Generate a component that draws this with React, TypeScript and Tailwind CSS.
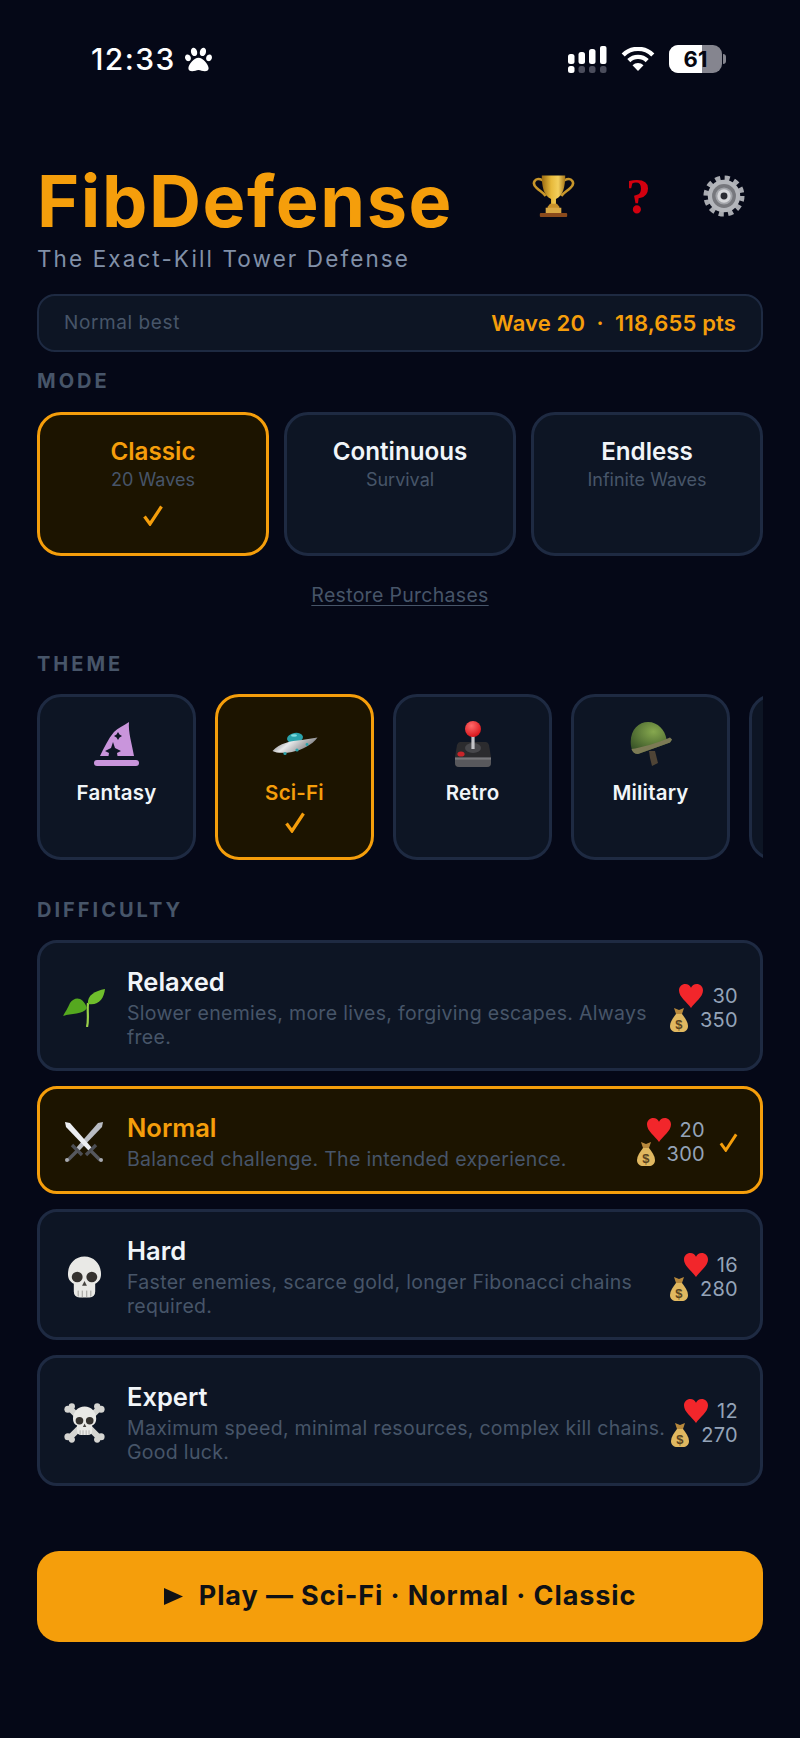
import { FaPaw } from 'react-icons/fa';

function Check({ className }: { className: string }) {
  return (
    <svg viewBox="0 0 20 21" className={className} fill="none">
      <path d="M1.5 11.5 L7 19 L18.5 1.5" stroke="#f59e0b" strokeWidth="3.2" strokeLinejoin="miter" />
    </svg>
  );
}

function Wifi() {
  return (
    <svg viewBox="0 0 34 24" className="w-[34px] h-[24px]" fill="none">
      <path d="M2.2 8A21 21 0 0 1 31.8 8" stroke="white" strokeWidth="4.4" />
      <path d="M7.8 13.6A13.2 13.2 0 0 1 26.2 13.6" stroke="white" strokeWidth="4.4" />
      <path d="M17 24L11.5 18.2A8 8 0 0 1 22.5 18.2Z" fill="white" />
    </svg>
  );
}

function Signal() {
  return (
    <svg viewBox="0 0 39 27" className="w-[39px] h-[27px]">
      <rect x="0" y="8" width="6.5" height="10" rx="2.5" fill="white" />
      <rect x="10.5" y="6" width="6.5" height="12" rx="2.5" fill="white" />
      <rect x="21" y="3" width="6.5" height="15" rx="2.5" fill="white" />
      <rect x="32" y="0" width="6.5" height="18" rx="2" fill="white" />
      <rect x="0" y="20" width="6.5" height="7" rx="2.5" fill="white" />
      <rect x="10.5" y="20" width="6.5" height="7" rx="2.5" fill="#4b4d5c" />
      <rect x="21" y="20" width="6.5" height="7" rx="2.5" fill="#4b4d5c" />
      <rect x="32" y="20" width="6.5" height="7" rx="2.5" fill="#4b4d5c" />
    </svg>
  );
}

function Battery() {
  return (
    <div className="flex items-center gap-[1px]">
      <div className="relative w-[53px] h-[28px] rounded-[9px] bg-[#85858f] overflow-hidden">
        <div className="absolute left-0 top-0 bottom-0 w-[33px] bg-white" />
        <div className="absolute inset-0 flex items-center justify-center text-[#05060f] text-[22px] font-bold leading-none">61</div>
      </div>
      <div className="w-[3px] h-[10px] rounded-r-full bg-[#85858f]" />
    </div>
  );
}

function Trophy() {
  return (
    <svg viewBox="0 0 44 44" className="w-[43px] h-[44px]" fill="none">
      <defs>
        <linearGradient id="cup" x1="0" x2="1" y1="0" y2="0">
          <stop offset="0" stopColor="#9a6a12" />
          <stop offset="0.4" stopColor="#e7b93a" />
          <stop offset="0.7" stopColor="#f3cf5c" />
          <stop offset="1" stopColor="#a8761a" />
        </linearGradient>
      </defs>
      <path d="M11 6 C3 2 -1 9 5 14 C8 17 11 18 14 22" stroke="#c8962a" strokeWidth="2.6" />
      <path d="M33 6 C41 2 45 9 39 14 C36 17 33 18 30 22" stroke="#c8962a" strokeWidth="2.6" />
      <path d="M10 1 H34 C34 12 32 22 24.5 25 V31 H19.5 V25 C12 22 10 12 10 1Z" fill="url(#cup)" />
      <path d="M16 33 L18.5 30 H25.5 L28 33 V38 H16Z" fill="#c8912a" />
      <rect x="14" y="34" width="16" height="6" fill="#d9a945" />
      <rect x="8" y="39.5" width="28" height="4" rx="1" fill="#8a4a1c" />
    </svg>
  );
}

function Gear() {
  return (
    <svg viewBox="0 0 44 44" className="w-[42px] h-[42px]" fill="none">
      <circle cx="22" cy="22" r="18.5" stroke="#a9abb1" strokeWidth="6" strokeDasharray="5.2 4.5" />
      <circle cx="22" cy="22" r="17" fill="#b4b6bb" />
      <circle cx="22" cy="22" r="12.5" fill="#77787d" />
      <circle cx="22" cy="22" r="9" fill="#a2a4a9" />
      <circle cx="22" cy="22" r="7" fill="#d6d7da" />
      <circle cx="22" cy="22" r="3.6" fill="#2b2c33" />
    </svg>
  );
}

function Hat() {
  return (
    <svg viewBox="0 0 45 44" className="w-[45px] h-[44px]">
      <path d="M35 0 C29 4 24 6 20 10 C14 17 10 26 6 34 H40 C38 22 34 10 35 0Z" fill="#c995dc" />
      <path d="M24 10 L25.5 12.5 L28 14 L25.5 15.5 L24 18 L22.5 15.5 L20 14 L22.5 12.5Z" fill="#0d1524" />
      <path d="M19 20 L21 26 L27 29 L23 31 L23.5 34 H14.5 L15 31 L11 29 L17 26Z" fill="#0d1524" />
      <rect x="0" y="38" width="45" height="6" rx="3" fill="#c995dc" />
    </svg>
  );
}

function Ufo() {
  return (
    <svg viewBox="0 0 46 24" className="w-[46px] h-[24px]">
      <defs>
        <linearGradient id="disc" x1="0" x2="1" y1="0" y2="0.4">
          <stop offset="0" stopColor="#5c5d60" />
          <stop offset="0.45" stopColor="#e8e9ea" />
          <stop offset="1" stopColor="#77787c" />
        </linearGradient>
      </defs>
      <ellipse cx="23" cy="6" rx="8" ry="5" fill="#2aa3ab" transform="rotate(-10 23 6)" />
      <ellipse cx="22" cy="3.5" rx="3" ry="1.2" fill="#7fdde0" />
      <path d="M0.5 19 C8 11 18 9 30 8 L45.5 5.5 C40 13 30 18 20 20 C12 21.5 4 21 0.5 19Z" fill="url(#disc)" />
      <circle cx="13" cy="21.5" r="1.6" fill="#2aa3ab" />
      <circle cx="25" cy="18" r="1.6" fill="#2aa3ab" />
      <circle cx="35" cy="12.5" r="1.4" fill="#2aa3ab" />
    </svg>
  );
}

function Joystick() {
  return (
    <svg viewBox="0 0 36 46" className="w-[36px] h-[46px]">
      <defs>
        <radialGradient id="ball" cx="0.4" cy="0.3" r="0.7">
          <stop offset="0" stopColor="#ff6a6a" />
          <stop offset="1" stopColor="#d9161c" />
        </radialGradient>
      </defs>
      <path d="M5 21 H31 Q33 21 34 24 L36 36 V42 Q36 46 32 46 H4 Q0 46 0 42 V36 L2 24 Q3 21 5 21Z" fill="#2b2b2e" />
      <path d="M0 36 H36 V42 Q36 46 32 46 H4 Q0 46 0 42Z" fill="#58585c" />
      <rect x="0" y="37" width="36" height="1.6" fill="#77777b" />
      <ellipse cx="18" cy="27" rx="8" ry="5" fill="#47474b" />
      <rect x="16.4" y="14" width="3.2" height="14" fill="#c4c4c8" />
      <circle cx="18" cy="8" r="8" fill="url(#ball)" />
      <ellipse cx="6" cy="33" rx="3.6" ry="2.6" fill="#c8242a" />
    </svg>
  );
}

function Helmet() {
  return (
    <svg viewBox="0 0 42 44" className="w-[42px] h-[44px]">
      <defs>
        <radialGradient id="dome" cx="0.55" cy="0.3" r="0.7">
          <stop offset="0" stopColor="#86a84e" />
          <stop offset="1" stopColor="#3a5528" />
        </radialGradient>
      </defs>
      <path d="M19 29 H25 L28 41 L22 44 L20 36Z" fill="#4f4436" />
      <path d="M1 24 C-1 9 8 0 18 0 C28 0 35 8 36.5 17 L42 17.5 L40 20.5 L8 32 Q2 32 1 24Z" fill="url(#dome)" />
      <path d="M1.5 27 C10 26 28 21 40 15.5 L42 17.5 L40 20.5 L8 32 Q3 32 1.5 27Z" fill="#7c7a55" />
    </svg>
  );
}

function Seedling() {
  return (
    <svg viewBox="0 0 42 38" className="w-[42px] h-[38px]" fill="none">
      <path d="M24 38 C26 30 24 22 25 14" stroke="#9ad04a" strokeWidth="2.2" />
      <path d="M24 19 C20 8 12 7 7 14 C5 19 2 23 0 27 C8 24 20 26 24 19Z" fill="#55a81f" />
      <path d="M25 15 C24 6 32 2 42 0 C41 9 36 17 25 15Z" fill="#6fbe2c" />
    </svg>
  );
}

function Swords() {
  return (
    <svg viewBox="0 0 40 40" className="w-[40px] h-[40px]" fill="none">
      <path d="M39 0 L34 1 L12 26 L15 29 L38 5Z" fill="#b9bcc3" />
      <path d="M1 0 L6 1 L28 26 L25 29 L2 5Z" fill="#eceef2" />
      <path d="M8 23 L18 33" stroke="#4d4f55" strokeWidth="3.4" />
      <path d="M32 23 L22 33" stroke="#4d4f55" strokeWidth="3.4" />
      <path d="M13 29 L4 38" stroke="#56585e" strokeWidth="3.4" />
      <path d="M27 29 L36 38" stroke="#56585e" strokeWidth="3.4" />
      <circle cx="3" cy="38" r="2" fill="#a8aab0" />
      <circle cx="37" cy="38" r="2" fill="#a8aab0" />
    </svg>
  );
}

function SkullFace() {
  return (
    <>
      <path d="M18 0 C28 0 35 8 35 18 C35 23 33 26 29 28 V36 Q29 42 23 42 H13 Q7 42 7 36 V28 C3 26 1 23 1 18 C1 8 8 0 18 0Z" fill="#e9e9e6" />
      <ellipse cx="10.5" cy="21" rx="5.6" ry="5.4" fill="#35322f" />
      <ellipse cx="25.5" cy="21" rx="5.6" ry="5.4" fill="#35322f" />
      <path d="M18 25 L20.5 30 H15.5Z" fill="#45423f" />
      <path d="M11.5 35 V41 M15.7 35 V42 M20.3 35 V42 M24.5 35 V41" stroke="#9b9a96" strokeWidth="1" fill="none" />
    </>
  );
}

function Skull() {
  return (
    <svg viewBox="0 0 36 42" className="w-[35px] h-[42px]">
      <SkullFace />
    </svg>
  );
}

function Crossbones() {
  return (
    <svg viewBox="0 0 42 40" className="w-[41px] h-[40px]">
      <path d="M6 5 L36 35 M36 5 L6 35" stroke="#d5d5d2" strokeWidth="6" fill="none" />
      <circle cx="4" cy="6" r="3.6" fill="#d5d5d2" />
      <circle cx="8" cy="3" r="3.2" fill="#d5d5d2" />
      <circle cx="38" cy="6" r="3.6" fill="#d5d5d2" />
      <circle cx="34" cy="3" r="3.2" fill="#d5d5d2" />
      <circle cx="4" cy="34" r="3.6" fill="#d5d5d2" />
      <circle cx="8" cy="37" r="3.2" fill="#d5d5d2" />
      <circle cx="38" cy="34" r="3.6" fill="#d5d5d2" />
      <circle cx="34" cy="37" r="3.2" fill="#d5d5d2" />
      <g transform="translate(8.5 3) scale(0.7)">
        <SkullFace />
      </g>
    </svg>
  );
}

function Heart() {
  return (
    <svg viewBox="0 0 24 24" className="w-[24px] h-[24px]">
      <path d="M12 24 C8 18 0 13 0 6.5 C0 2.5 3 0 6.3 0 C9 0 11 1.5 12 3.8 C13 1.5 15 0 17.7 0 C21 0 24 2.5 24 6.5 C24 13 16 18 12 24Z" fill="#f2262b" />
    </svg>
  );
}

function MoneyBag() {
  return (
    <svg viewBox="0 0 18 24" className="w-[18px] h-[24px]">
      <path d="M4 0 L9 2 L14 0 L12 6 H6Z" fill="#b8893c" />
      <path d="M6 6 H12 C15 10 18 14 18 18 C18 22 15 24 12 24 H6 C3 24 0 22 0 18 C0 14 3 10 6 6Z" fill="#e0b860" />
      <text x="9" y="20.5" textAnchor="middle" fontSize="13" fontWeight="700" fill="#5a4420" fontFamily="Liberation Sans">$</text>
    </svg>
  );
}

const modes = [
  { name: 'Classic', sub: '20 Waves', on: true },
  { name: 'Continuous', sub: 'Survival', on: false },
  { name: 'Endless', sub: 'Infinite Waves', on: false },
];

const themes = [
  { name: 'Fantasy', icon: <Hat />, on: false },
  { name: 'Sci-Fi', icon: <Ufo />, on: true },
  { name: 'Retro', icon: <Joystick />, on: false },
  { name: 'Military', icon: <Helmet />, on: false },
];

const levels = [
  { name: 'Relaxed', desc: 'Slower enemies, more lives, forgiving escapes. Always free.', lives: 30, gold: 350, icon: <Seedling />, on: false },
  { name: 'Normal', desc: 'Balanced challenge. The intended experience.', lives: 20, gold: 300, icon: <Swords />, on: true },
  { name: 'Hard', desc: 'Faster enemies, scarce gold, longer Fibonacci chains required.', lives: 16, gold: 280, icon: <Skull />, on: false },
  { name: 'Expert', desc: 'Maximum speed, minimal resources, complex kill chains. Good luck.', lives: 12, gold: 270, icon: <Crossbones />, on: false },
];

function Label({ children, className }: { children: string; className: string }) {
  return <div className={`text-[20px] leading-[24px] font-bold tracking-[3px] text-[#475569] ${className}`}>{children}</div>;
}

export default function App() {
  return (
    <div className="w-[800px] h-[1738px] bg-[#050817] px-[37px] [font-family:Inter,sans-serif] overflow-hidden">
      <div className="flex items-center justify-between h-[30px] mt-[44px] ml-[54px] mr-[-37px] pr-[74px]">
        <div className="flex items-center gap-[8px] text-white">
          <span className="text-[30px] font-medium leading-none tracking-[1.4px]">12:33</span>
          <FaPaw className="w-[29px] h-[27px]" />
        </div>
        <div className="flex items-center gap-[14px]">
          <Signal />
          <Wifi />
          <Battery />
        </div>
      </div>

      <div className="flex items-center justify-between h-[80px] mt-[87px]">
        <h1 className="text-[72px] leading-[80px] font-bold tracking-[1.6px] text-[#f59e0b]">FibDefense</h1>
        <div className="flex items-center pr-[18px] mb-[10px]">
          <Trophy />
          <div className="w-[55px] text-center text-[50px] leading-[44px] font-bold text-[#d3000f] [font-family:'Liberation_Serif',serif] ml-[36px]">?</div>
          <div className="ml-[37px]">
            <Gear />
          </div>
        </div>
      </div>
      <p className="text-[22.5px] leading-[30px] tracking-[2.1px] text-[#8190a8] mt-[3px]">The Exact-Kill Tower Defense</p>

      <div className="flex items-center justify-between h-[58px] mt-[20px] px-[25px] bg-[#0d1524] border-2 border-[#1e2a42] rounded-[18px]">
        <span className="text-[19px] tracking-[0.6px] text-[#475569]">Normal best</span>
        <span className="text-[22px] font-semibold tracking-[0.15px] text-[#f59e0b]">Wave 20 &nbsp;·&nbsp; 118,655 pts</span>
      </div>

      <Label className="mt-[17px]">MODE</Label>
      <div className="flex gap-[15px] mt-[19px]">
        {modes.map((m) => (
          <div
            key={m.name}
            className={`w-[232px] h-[144px] rounded-[24px] border-[3px] flex flex-col items-center pt-[22px] ${m.on ? 'bg-[#1c1400] border-[#f59e0b]' : 'bg-[#0d1524] border-[#1e2a42]'}`}
          >
            <div className={`text-[24.2px] leading-[30px] font-semibold ${m.on ? 'text-[#f59e0b]' : 'text-[#f1f5f9]'}`}>{m.name}</div>
            <div className="text-[18px] leading-[26px] text-[#475569]">{m.sub}</div>
            {m.on && <Check className="w-[20px] h-[21px] mt-[12px]" />}
          </div>
        ))}
      </div>

      <div className="text-center mt-[27px] text-[19.5px] leading-[24px] tracking-[0.3px] text-[#475569] underline underline-offset-[3px]">Restore Purchases</div>

      <Label className="mt-[45px]">THEME</Label>
      <div className="flex gap-[19px] mt-[18px] overflow-hidden">
        {themes.map((t) => (
          <div
            key={t.name}
            className={`w-[159px] h-[166px] shrink-0 rounded-[24px] border-[3px] flex flex-col items-center ${t.on ? 'bg-[#1c1400] border-[#f59e0b]' : 'bg-[#0d1524] border-[#1e2a42]'}`}
          >
            <div className="h-[48px] mt-[23px] flex items-center justify-center">{t.icon}</div>
            <div className={`text-[20.5px] leading-[26px] font-semibold tracking-[0.2px] mt-[12px] ${t.on ? 'text-[#f59e0b]' : 'text-[#f1f5f9]'}`}>{t.name}</div>
            {t.on && <Check className="w-[20px] h-[21px] mt-[6px]" />}
          </div>
        ))}
        <div className="w-[159px] h-[166px] shrink-0 rounded-[24px] border-[3px] bg-[#0d1524] border-[#1e2a42]" />
      </div>

      <Label className="mt-[38px]">DIFFICULTY</Label>
      <div className="flex flex-col gap-[15px] mt-[18px]">
        {levels.map((l) => (
          <div
            key={l.name}
            className={`flex items-center min-h-[108px] rounded-[20px] border-[3px] pl-[23px] pr-[22px] pt-[23.5px] pb-[19.5px] ${l.on ? 'bg-[#1c1400] border-[#f59e0b]' : 'bg-[#0d1524] border-[#1e2a42]'}`}
          >
            <div className="w-[42px] shrink-0 flex justify-center">{l.icon}</div>
            <div className="flex-1 ml-[22px]">
              <div className={`text-[25.5px] leading-[30px] font-semibold ${l.on ? 'text-[#f59e0b]' : 'text-[#f1f5f9]'}`}>{l.name}</div>
              <div className="text-[19.5px] leading-[24px] tracking-[0.3px] mt-[4px] text-[#475569]">{l.desc}</div>
            </div>
            <div className="shrink-0 flex flex-col items-end text-[20px] leading-[24px] tracking-[0.3px] text-[#94a3b8]">
              <div className="flex items-center gap-[9px]">
                <Heart />
                <span>{l.lives}</span>
              </div>
              <div className="flex items-center gap-[12px]">
                <MoneyBag />
                <span>{l.gold}</span>
              </div>
            </div>
            {l.on && <Check className="w-[19px] h-[19px] ml-[14px]" />}
          </div>
        ))}
      </div>

      <div className="flex items-center justify-center gap-[16px] h-[91px] mt-[65px] bg-[#f59e0b] rounded-[22px]">
        <svg viewBox="0 0 19 17" className="w-[19px] h-[17px]">
          <path d="M0 0 L19 8.5 L0 17Z" fill="#0f1115" />
        </svg>
        <span className="text-[27px] font-bold tracking-[0.9px] text-[#0f1115]">Play — Sci-Fi · Normal · Classic</span>
      </div>
    </div>
  );
}
